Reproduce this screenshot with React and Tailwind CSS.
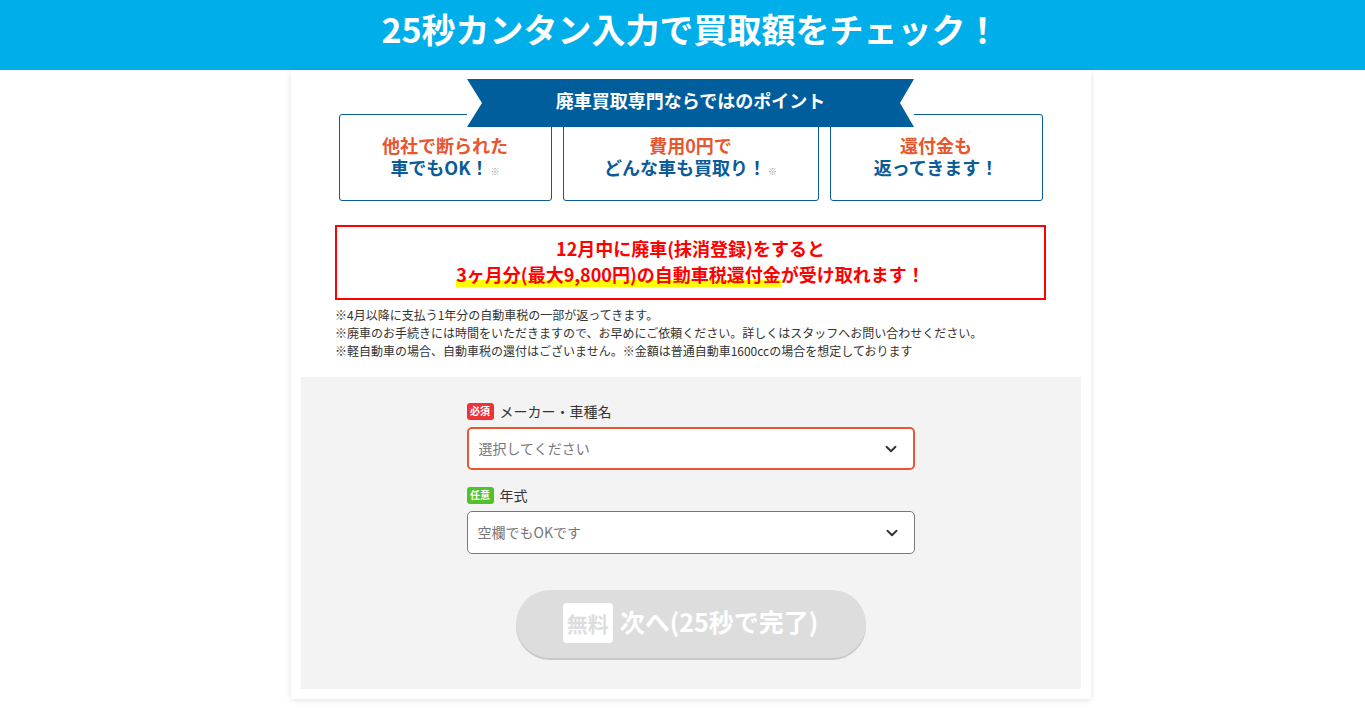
import { ChevronDown } from 'lucide-react'

const points = [
  { top: '他社で断られた', bottom: '車でもOK！', note: true, w: 'w-[213px]' },
  { top: '費用0円で', bottom: 'どんな車も買取り！', note: true, w: 'w-[256px]' },
  { top: '還付金も', bottom: '返ってきます！', note: false, w: 'w-[213px]' },
]

function Field({ badge, badgeColor, label, placeholder, active }) {
  return (
    <div>
      <div className="flex items-center gap-[6px] h-[20px]">
        <span className={`w-[27px] h-[17px] rounded-[3px] ${badgeColor} text-white text-[10px] font-bold leading-none flex items-center justify-center`}>
          {badge}
        </span>
        <span className="text-[14px] text-[#333] leading-none">{label}</span>
      </div>
      <div className={`mt-[6px] h-[43px] bg-white rounded-[5px] flex items-center justify-between pl-[10px] pr-[13px] ${active ? 'border-2 border-[#ea5532]' : 'border border-[#777]'}`}>
        <span className="text-[14px] text-[#777]">{placeholder}</span>
        <ChevronDown size={18} strokeWidth={2.5} className="text-[#333]" />
      </div>
    </div>
  )
}

export default function App() {
  return (
    <div className="min-h-screen bg-white font-['Noto_Sans_CJK_JP',sans-serif]">
      {/* ヘッダー */}
      <header className="h-[70px] bg-[#00aeea] flex items-center justify-center pl-[16px] pb-[12px]">
        <h1 className="text-white text-[34px] font-bold leading-none">25秒カンタン入力で買取額をチェック！</h1>
      </header>

      <div className="pl-[16px]">
        <div className="w-[800px] mx-auto bg-white shadow-[0_1px_6px_rgba(0,0,0,0.12)] px-[10px] pt-[9px] pb-[10px]">
          {/* ポイント */}
          <div className="w-[704px] mx-auto">
            <div className="relative z-10 mx-auto w-[447px] h-[48px] bg-white">
              <div className="h-full bg-[#015e9c] flex items-center justify-center pb-[6px] [clip-path:polygon(0_0,100%_0,calc(100%_-_14px)_50%,100%_100%,0_100%,15px_50%)]">
                <span className="text-white text-[18px] font-bold leading-none">廃車買取専門ならではのポイント</span>
              </div>
            </div>
            <div className="flex gap-[11px] mt-[-13px]">
              {points.map((p, i) => (
                <div key={i} className={`${p.w} h-[87px] border border-[#0a5b98] rounded-[3px] flex flex-col items-center justify-center pb-[4px] text-[18px] font-bold leading-[22px]`}>
                  <div className="text-[#e8562e]">{p.top}</div>
                  <div className="text-[#0a5b98] flex items-baseline">
                    <span>{p.bottom}</span>
                    {p.note && <span className="text-[9px] text-[#999] font-normal ml-[2px] leading-none">※</span>}
                  </div>
                </div>
              ))}
            </div>
          </div>

          {/* 還付金 */}
          <div className="w-[711px] mx-auto mt-[24px] h-[75px] border-2 border-[#f00] flex flex-col items-center justify-center pb-[4px] text-[#f00] text-[18px] font-bold leading-[26px]">
            <div>12月中に廃車(抹消登録)をすると</div>
            <div>
              <span className="bg-[linear-gradient(transparent_72%,#ffff00_72%)]">3ヶ月分(最大9,800円)の自動車税還付金</span>
              が受け取れます！
            </div>
          </div>
          <div className="w-[711px] mx-auto mt-[6px] text-[12px] leading-[18px] text-[#333]">
            <p>※4月以降に支払う1年分の自動車税の一部が返ってきます。</p>
            <p>※廃車のお手続きには時間をいただきますので、お早めにご依頼ください。詳しくはスタッフへお問い合わせください。</p>
            <p>※軽自動車の場合、自動車税の還付はございません。※金額は普通自動車1600ccの場合を想定しております</p>
          </div>

          {/* フォーム */}
          <div className="mt-[17px] h-[312px] bg-[#f3f3f3] pt-[24px]">
            <div className="w-[448px] mx-auto">
              <Field badge="必須" badgeColor="bg-[#ee3338]" label="メーカー・車種名" placeholder="選択してください" active />
              <div className="mt-[15px]">
                <Field badge="任意" badgeColor="bg-[#52c22c]" label="年式" placeholder="空欄でもOKです" />
              </div>
            </div>
            <div className="mt-[36px] mx-auto w-[350px] h-[68px] rounded-full bg-[#dddddd] shadow-[0_2px_0_#c9c9c9] flex items-center justify-center gap-[7px] pb-[2px]">
              <span className="w-[50px] h-[40px] rounded-[4px] bg-white text-[#dddddd] text-[21px] font-bold flex items-center justify-center leading-none">無料</span>
              <span className="text-white text-[25px] font-bold leading-none pb-[3px]">次へ(25秒で完了)</span>
            </div>
          </div>
        </div>
      </div>
    </div>
  )
}
